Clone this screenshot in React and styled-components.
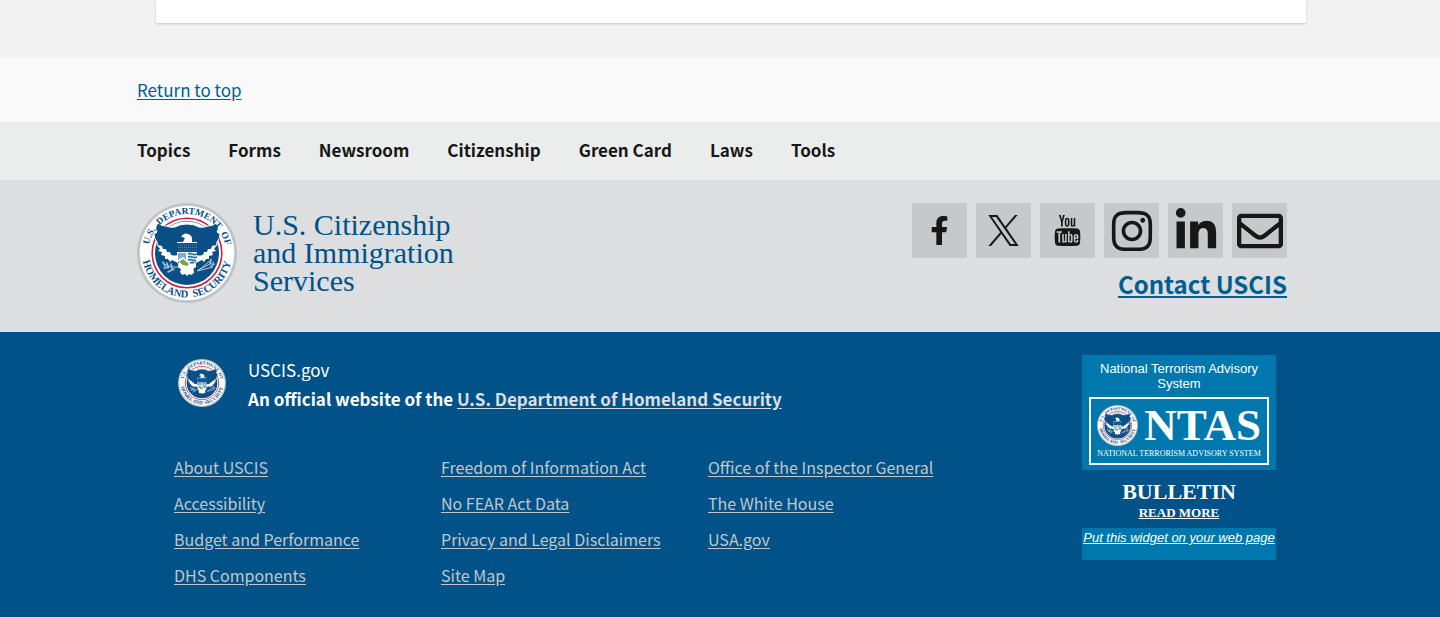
import React, { useId } from "react";
import styled, { createGlobalStyle } from "styled-components";
import { FaFacebookF, FaInstagram, FaLinkedinIn, FaRegEnvelope } from "react-icons/fa";
import { TfiYoutube } from "react-icons/tfi";

const sans = `"Noto Sans CJK SC", "Open Sans", sans-serif`;
const serif = `"Liberation Serif", serif`;

const GlobalStyle = createGlobalStyle`
  *, *::before, *::after { box-sizing: border-box; }
  body { margin: 0; background: #005288; font-family: ${sans}; font-size: 17px; color: #1b1b1b; }
  ul { list-style: none; margin: 0; padding: 0; }
  p { margin: 0; }
`;

const Main = styled.main`
  background: #f2f2f2;
  padding: 0 0 35px 21px;
`;

const Card = styled.div`
  max-width: 1150px;
  height: 23px;
  margin: 0 auto;
  background: #fff;
  box-shadow: 0 1px 2px rgba(0, 0, 0, 0.2);
`;

const Band = styled.div`
  background: ${(p) => p.$bg};
  padding-right: 16px;
`;

const Container = styled.div`
  max-width: 1150px;
  margin: 0 auto;
`;

const ReturnRow = styled(Container)`
  padding: 18px 0;
  line-height: 28px;
`;

const Link = styled.a`
  color: #005e93;
  text-decoration: underline;
  text-underline-offset: 2px;
`;

const NavList = styled.ul`
  display: flex;
  flex-wrap: wrap;
  gap: 0 38px;
  max-width: 1150px;
  margin: 0 auto;
  padding: 14px 0 16px;
  line-height: 28px;
`;

const NavLink = styled.a`
  color: #171717;
  font-weight: 700;
  text-decoration: none;
`;

const BrandRow = styled(Container)`
  display: flex;
  justify-content: space-between;
  padding: 23px 0 29px;
`;

const Brand = styled.div`
  display: flex;
  align-items: flex-start;
  gap: 16px;
`;

const BrandName = styled.p`
  padding-top: 8px;
  color: #005288;
  font: 400 30px/28px ${serif};
`;

const Connect = styled.div`
  display: flex;
  flex-direction: column;
  align-items: flex-end;
  gap: 8px;
`;

const SocialList = styled.ul`
  display: flex;
  gap: 9px;
`;

const SocialLink = styled.a`
  display: flex;
  align-items: center;
  justify-content: center;
  width: 55px;
  height: 55px;
  background: #c6c8ca;
  color: #171717;
`;

const ContactLink = styled(Link)`
  font-size: 24px;
  font-weight: 700;
  line-height: 36px;
`;

const Identifier = styled(Container)`
  display: flex;
  justify-content: space-between;
  padding: 23px 11px 20px 37px;
`;

const Agency = styled.div`
  display: flex;
  gap: 22px;
  padding-left: 4px;
  margin-bottom: 36px;
`;

const AgencyText = styled.div`
  color: #fff;
  line-height: 29px;
`;

const AgencySeal = styled.div`
  padding-top: 4px;
`;

const AgencyLink = styled.a`
  color: #dcdee0;
  text-underline-offset: 2px;
`;

const LinkColumns = styled.div`
  display: grid;
  grid-template-columns: repeat(3, 267px);
  font-size: 16px;
  line-height: 36px;
`;

const FooterLink = styled(Link)`
  color: #c3c7ca;
`;

const Widget = styled.aside`
  width: 194px;
  color: #fff;
  text-align: center;
  font: 13px/15px "Liberation Sans", sans-serif;
`;

const WidgetTop = styled.div`
  background: #0078ae;
  padding: 6px 7px 5px;
`;

const NtasBox = styled.div`
  margin-top: 6px;
  padding: 3px 6px 5px;
  border: 2px solid #fff;
`;

const NtasRow = styled.div`
  display: flex;
  align-items: center;
  justify-content: space-between;
`;

const NtasName = styled.span`
  font: 700 45px/46px ${serif};
`;

const NtasCaption = styled.p`
  padding-top: 2px;
  font: 8px/8px ${serif};
  white-space: nowrap;
`;

const Bulletin = styled.div`
  display: flex;
  flex-direction: column;
  align-items: center;
  padding: 9px 0 8px;
  font-family: ${serif};
  font-weight: 700;
`;

const BulletinTitle = styled.span`
  font-size: 22px;
  line-height: 26px;
`;

const ReadMore = styled.a`
  color: #fff;
  font-size: 13px;
  line-height: 15px;
`;

const WidgetBottom = styled.div`
  height: 32px;
  padding-top: 2px;
  background: #0078ae;
`;

const WidgetLink = styled.a`
  color: #fff;
  font-style: italic;
  white-space: nowrap;
`;

function Seal({ size }) {
  const id = useId();
  const blue = "#0b4f87";
  return (
    <svg width={size} height={size} viewBox="0 0 100 100" role="img" aria-label="Department of Homeland Security seal">
      <defs>
        <path id={`${id}t`} d="M11.7 58.1A39.1 39.1 0 1 1 88.3 58.1" />
        <path id={`${id}b`} d="M5.7 43.8A44.7 44.7 0 1 0 94.3 43.8" />
      </defs>
      <circle cx="50" cy="50" r="50" fill="#c0c3c5" />
      <circle cx="50" cy="50" r="47.3" fill="#fff" />
      <circle cx="50" cy="50" r="34.8" fill="none" stroke="#c8233f" strokeWidth="1.6" />
      <circle cx="50" cy="50" r="32" fill={blue} />
      <path d="M26 32Q50 8 74 32L76 42H24Z" fill="#fff" />
      <path d="M28 27A32.6 32.6 0 0 1 72 27L67 31L58 29H42L33 31Z" fill="#fff" />
      <path d="M32 17.5A37 37 0 0 1 68 17.5" fill="none" stroke="#fff" strokeWidth="1" />
      <path d="M21 20Q24 23 29 23Q34 25 38 24Q43 21 50 21Q57 21 62 24Q66 25 71 23Q76 23 79 20Q83 25 80 29L83 31Q83 36 80 39Q81 43 76 46L62 55H38L24 46Q19 43 20 39Q17 36 17 31L20 29Q17 25 21 20Z" fill={blue} stroke="#fff" strokeWidth="1" />
      <g fill={blue} fontFamily="Liberation Serif, serif" fontWeight="700" fontSize="9.5" textAnchor="middle">
        <text><textPath href={`#${id}t`} startOffset="18%">U.S.</textPath></text>
        <text><textPath href={`#${id}t`} startOffset="52%">DEPARTMENT</textPath></text>
        <text><textPath href={`#${id}t`} startOffset="84%">OF</textPath></text>
        <text fontSize="10.5"><textPath href={`#${id}b`} startOffset="30%">HOMELAND</textPath></text>
        <text fontSize="10.5"><textPath href={`#${id}b`} startOffset="72%">SECURITY</textPath></text>
      </g>
      <path d="M21 42L25 43L26 46L29 46L30 49L33 49L34 52L39 53V59L35 57L33 59L31 56L28 56L28 53L24 52L25 49L21 48L23 46Z" fill="#fff" />
      <path d="M79 42L75 43L74 46L71 46L70 49L67 49L66 52L61 53V59L65 57L67 59L69 56L72 56L72 53L76 52L75 49L79 48L77 46Z" fill="#fff" />
      <path d="M36 53L41 52V64L49 70L59 64V52L64 53L60 60H40Z" fill="#fff" />
      <path d="M45 63L50 66L56 62L57 70L54 72L52 71L50 73L48 71L45 72L43 69Z" fill="#fff" />
      <path d="M44 34Q47 29 51 31Q56 32 55 39H46L48 35Q46 34 44 34Z" fill="#fff" />
      <path d="M40 39H60V56Q57 63 50 66Q43 63 40 56Z" fill="#fff" />
      <path d="M40 40H61V49H40Z" fill={blue} />
      <path d="M41 42H60M41 44.5H60M41 47H60" stroke="#7194b8" strokeWidth=".8" strokeDasharray="1 1" />
      <path d="M41 50H49V57L46 54L41 57Z" fill="#79b0d8" />
      <path d="M42 59L46 56L52 61L50 63Q45 62 42 59Z" fill="#76a73d" />
      <path d="M51 51Q53 50 55 51T60 51M51 54Q53 53 55 54T60 54M51 57Q53 56 55 57T59 57M53 60Q55 59 57 60" stroke="#267bad" strokeWidth="1.8" fill="none" />
      <path d="M25 59Q32 65 42 64M75 56L61 68M77 59L61 67M76 64L60 68" stroke="#b3cadd" strokeWidth="1" fill="none" />
      <path d="M26 59L28 63M30 60L31 65M34 61L35 66M27 65L32 64M31 69L37 66M74 57L73 60M77 61L74 63" stroke="#a5c0d6" strokeWidth="1.6" strokeLinecap="round" />
    </svg>
  );
}

const XLogo = () => (
  <svg width="31" height="31" viewBox="0 0 1200 1227" fill="currentColor" aria-hidden="true">
    <path d="M714.163 519.284L1160.89 0H1055.03L667.137 450.887L357.328 0H0L468.492 681.821L0 1226.37H105.866L515.491 750.218L842.672 1226.37H1200L714.137 519.284H714.163ZM569.165 687.828L521.697 619.934L144.011 79.6944H306.615L611.412 515.685L658.88 583.579L1055.08 1150.3H892.476L569.165 687.854V687.828Z" />
  </svg>
);

const navItems = ["Topics", "Forms", "Newsroom", "Citizenship", "Green Card", "Laws", "Tools"];

const socials = [
  ["Facebook", <FaFacebookF size={29} />],
  ["X", <XLogo />],
  ["YouTube", <TfiYoutube size={31} />],
  ["Instagram", <FaInstagram size={46} />],
  ["LinkedIn", <FaLinkedinIn size={46} />],
  ["Email", <FaRegEnvelope size={46} />],
];

const footerLinks = [
  ["About USCIS", "Accessibility", "Budget and Performance", "DHS Components"],
  ["Freedom of Information Act", "No FEAR Act Data", "Privacy and Legal Disclaimers", "Site Map"],
  ["Office of the Inspector General", "The White House", "USA.gov"],
];

export default function App() {
  return (
    <>
      <GlobalStyle />
      <Main>
        <Card />
      </Main>
      <footer>
        <Band $bg="#f9f9f9">
          <ReturnRow>
            <Link href="#">Return to top</Link>
          </ReturnRow>
        </Band>
        <Band as="nav" $bg="#ebedec">
          <NavList>
            {navItems.map((item) => (
              <li key={item}>
                <NavLink href="#">{item}</NavLink>
              </li>
            ))}
          </NavList>
        </Band>
        <Band $bg="#dcdee0">
          <BrandRow>
            <Brand>
              <Seal size={100} />
              <BrandName>
                U.S. Citizenship
                <br />
                and Immigration
                <br />
                Services
              </BrandName>
            </Brand>
            <Connect>
              <SocialList>
                {socials.map(([name, icon]) => (
                  <li key={name}>
                    <SocialLink href="#" aria-label={name}>
                      {icon}
                    </SocialLink>
                  </li>
                ))}
              </SocialList>
              <ContactLink href="#">Contact USCIS</ContactLink>
            </Connect>
          </BrandRow>
        </Band>
        <Band $bg="#005288">
          <Identifier>
            <div>
              <Agency>
                <AgencySeal>
                  <Seal size={48} />
                </AgencySeal>
                <AgencyText>
                  <p>USCIS.gov</p>
                  <p>
                    <strong>
                      An official website of the{" "}
                      <AgencyLink href="#">U.S. Department of Homeland Security</AgencyLink>
                    </strong>
                  </p>
                </AgencyText>
              </Agency>
              <LinkColumns>
                {footerLinks.map((column) => (
                  <ul key={column[0]}>
                    {column.map((label) => (
                      <li key={label}>
                        <FooterLink href="#">{label}</FooterLink>
                      </li>
                    ))}
                  </ul>
                ))}
              </LinkColumns>
            </div>
            <Widget>
              <WidgetTop>
                <p>National Terrorism Advisory System</p>
                <NtasBox>
                  <NtasRow>
                    <Seal size={41} />
                    <NtasName>NTAS</NtasName>
                  </NtasRow>
                  <NtasCaption>NATIONAL TERRORISM ADVISORY SYSTEM</NtasCaption>
                </NtasBox>
              </WidgetTop>
              <Bulletin>
                <BulletinTitle>BULLETIN</BulletinTitle>
                <ReadMore href="#">READ MORE</ReadMore>
              </Bulletin>
              <WidgetBottom>
                <WidgetLink href="#">Put this widget on your web page</WidgetLink>
              </WidgetBottom>
            </Widget>
          </Identifier>
        </Band>
      </footer>
    </>
  );
}
